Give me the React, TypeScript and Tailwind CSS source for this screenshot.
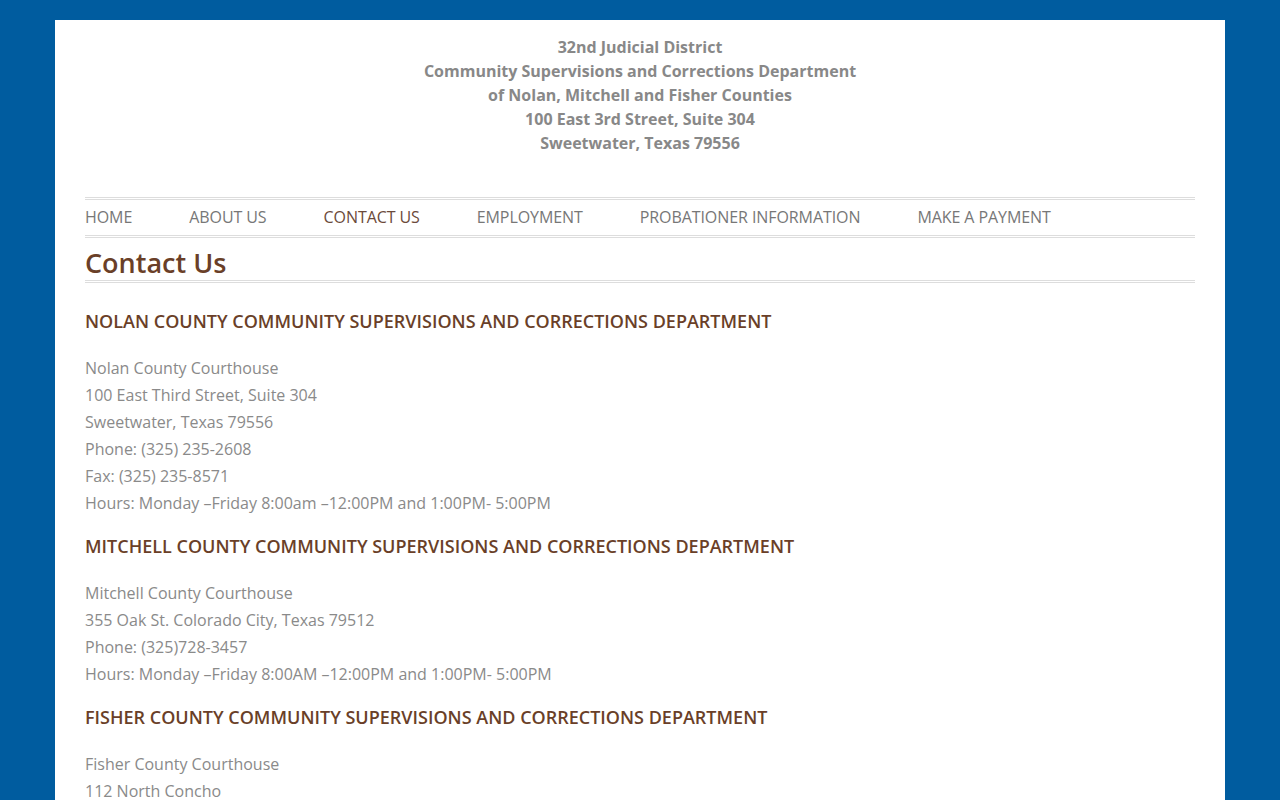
import React from 'react';

const navItems = ['HOME', 'ABOUT US', 'CONTACT US', 'EMPLOYMENT', 'PROBATIONER INFORMATION', 'MAKE A PAYMENT'];

const offices = [
  {
    title: 'NOLAN COUNTY COMMUNITY SUPERVISIONS AND CORRECTIONS DEPARTMENT',
    lines: [
      'Nolan County Courthouse',
      '100 East Third Street, Suite 304',
      'Sweetwater, Texas 79556',
      'Phone: (325) 235-2608',
      'Fax: (325) 235-8571',
      'Hours: Monday –Friday 8:00am –12:00PM and 1:00PM- 5:00PM',
    ],
  },
  {
    title: 'MITCHELL COUNTY COMMUNITY SUPERVISIONS AND CORRECTIONS DEPARTMENT',
    lines: [
      'Mitchell County Courthouse',
      '355 Oak St. Colorado City, Texas 79512',
      'Phone: (325)728-3457',
      'Hours: Monday –Friday 8:00AM –12:00PM and 1:00PM- 5:00PM',
    ],
  },
  {
    title: 'FISHER COUNTY COMMUNITY SUPERVISIONS AND CORRECTIONS DEPARTMENT',
    lines: ['Fisher County Courthouse', '112 North Concho', 'Roby, Texas 79543', 'Phone: (325) 776-2151'],
  },
];

export default function App() {
  return (
    <div className="min-h-screen bg-[#005c9f] pt-[20px] font-['Open_Sans',sans-serif]">
      <div className="mx-[55px] bg-white px-[30px] pb-10">
        <header className="pt-[15px] text-center text-[16px] font-bold leading-[24px] text-[#888888]">
          <p>32nd Judicial District</p>
          <p>Community Supervisions and Corrections Department</p>
          <p>of Nolan, Mitchell and Fisher Counties</p>
          <p>100 East 3rd Street, Suite 304</p>
          <p>Sweetwater, Texas 79556</p>
        </header>

        {/* main menu */}
        <nav className="mt-[42px] flex gap-[57px] border-y-[3px] border-double border-[#dddddd] text-[16px] leading-[35px] tracking-[-0.08px] text-[#777777]">
          {navItems.map((item) => (
            <a key={item} className={item === 'CONTACT US' ? 'text-[#6b4a3a]' : ''}>
              {item}
            </a>
          ))}
        </nav>

        <h1 className="mt-[7px] border-b-[3px] border-double border-[#dddddd] text-[27px] font-semibold leading-[35px] text-[#6a3f28]">
          Contact Us
        </h1>

        <div className="pt-[25px]">
          {offices.map((o) => (
            <section key={o.title} className="mb-[16px]">
              <h2 className="text-[18px] font-semibold leading-[27px] text-[#6a3f28]">{o.title}</h2>
              <div className="mt-[20px] text-[16px] leading-[27px] text-[#8a8a8a]">
                {o.lines.map((l) => (
                  <p key={l}>{l}</p>
                ))}
              </div>
            </section>
          ))}
        </div>
      </div>
    </div>
  );
}
